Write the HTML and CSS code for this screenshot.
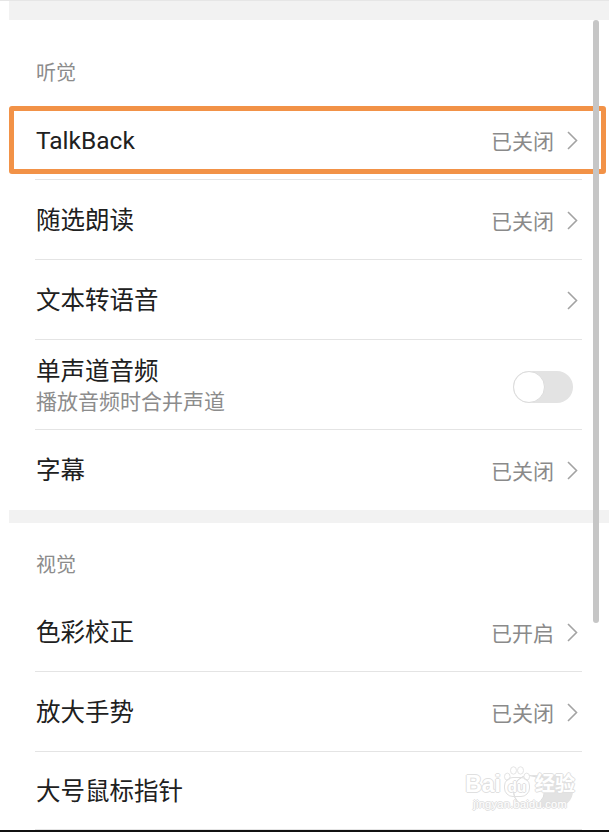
FILE: index.html
```html
<!DOCTYPE html>
<html lang="zh-CN">

<head>
    <meta charset="UTF-8">
    <meta name="viewport" content="width=device-width, initial-scale=1.0">
    <title>无障碍</title>
    <link rel="stylesheet" href="styles.css">
</head>

<body>
    <div class="screen">
        <div class="panel">
            <div class="band band-top"></div>

            <!-- 听觉 -->
            <div class="section-title first">听觉</div>

            <div class="row">
                <span class="label">TalkBack</span>
                <span class="status">已关闭</span>
                <svg class="chevron" viewBox="0 0 12 21"><path d="M2 2 L10.5 10.5 L2 19" /></svg>
                <div class="highlight"></div>
            </div>

            <div class="row">
                <span class="label">随选朗读</span>
                <span class="status">已关闭</span>
                <svg class="chevron" viewBox="0 0 12 21"><path d="M2 2 L10.5 10.5 L2 19" /></svg>
            </div>

            <div class="row">
                <span class="label">文本转语音</span>
                <svg class="chevron" viewBox="0 0 12 21"><path d="M2 2 L10.5 10.5 L2 19" /></svg>
            </div>

            <div class="row row-tall">
                <div class="text">
                    <span class="label">单声道音频</span>
                    <span class="sub">播放音频时合并声道</span>
                </div>
                <div class="switch"><div class="knob"></div></div>
            </div>

            <div class="row last">
                <span class="label">字幕</span>
                <span class="status">已关闭</span>
                <svg class="chevron" viewBox="0 0 12 21"><path d="M2 2 L10.5 10.5 L2 19" /></svg>
            </div>

            <div class="band"></div>

            <!-- 视觉 -->
            <div class="section-title">视觉</div>

            <div class="row">
                <span class="label">色彩校正</span>
                <span class="status">已开启</span>
                <svg class="chevron" viewBox="0 0 12 21"><path d="M2 2 L10.5 10.5 L2 19" /></svg>
            </div>

            <div class="row">
                <span class="label">放大手势</span>
                <span class="status">已关闭</span>
                <svg class="chevron" viewBox="0 0 12 21"><path d="M2 2 L10.5 10.5 L2 19" /></svg>
            </div>

            <div class="row row-end">
                <span class="label">大号鼠标指针</span>
                <div class="switch"><div class="knob"></div></div>

                <!-- watermark -->
                <div class="watermark">
                    <div class="wm-logo">
                        <span>Bai</span>
                        <span class="wm-paw">
                            <svg viewBox="0 0 34 18">
                                <ellipse cx="6" cy="12" rx="3.2" ry="4" />
                                <ellipse cx="13" cy="5" rx="3.4" ry="4.2" />
                                <ellipse cx="21" cy="5" rx="3.4" ry="4.2" />
                                <ellipse cx="28" cy="12" rx="3.2" ry="4" />
                            </svg>
                            <span class="wm-du">du</span>
                        </span>
                        <span class="wm-cn">经验</span>
                    </div>
                    <div class="wm-url">jingyan.baidu.com</div>
                </div>
            </div>
        </div>

        <div class="scrollbar"></div>
    </div>
</body>

</html>
```

FILE: styles.css
```css
body {
    margin: 0;
    background: #fff;
    font-family: Roboto, "Noto Sans CJK SC", sans-serif;
    overflow: hidden;
}

.screen {
    position: relative;
    height: 829px;
    border-top: 1px solid #e6e6e6;
    border-bottom: 2px solid #111;
    overflow: hidden;
}

.panel {
    margin-left: 9px;
}

/* grey separators between groups */
.band {
    height: 13px;
    background: #f2f2f2;
}

.band-top {
    height: 19px;
}

.section-title {
    height: 69px;
    box-sizing: border-box;
    display: flex;
    align-items: flex-end;
    padding: 0 0 14px 27px;
    font-size: 20px;
    line-height: 26px;
    color: #8c8c8c;
}

.section-title.first {
    height: 80px;
}

.row {
    position: relative;
    height: 80px;
    box-sizing: border-box;
    display: flex;
    align-items: center;
    padding: 0 31px 0 27px;
}

.row::after {
    content: "";
    position: absolute;
    left: 26px;
    right: 27px;
    bottom: 0;
    height: 1px;
    background: #e4e4e4;
}

.row.last::after {
    display: none;
}

.row-tall {
    height: 90px;
    padding-top: 3px;
}

.row-end {
    height: 78px;
}

.label {
    flex: 1;
    font-size: 24.5px;
    line-height: 31px;
    color: #202020;
}

.text {
    flex: 1;
    display: flex;
    flex-direction: column;
}

.sub {
    font-size: 21px;
    line-height: 31px;
    color: #8c8c8c;
}

.status {
    font-size: 21px;
    color: #8a8a8a;
    margin-right: 12px;
}

.chevron {
    width: 12px;
    height: 21px;
    fill: none;
    stroke: #a3a3a3;
    stroke-width: 1.6;
}

/* toggle, off */
.switch {
    position: relative;
    width: 60px;
    height: 32px;
    margin-right: 5px;
    border-radius: 16px;
    background: #e3e3e3;
}

.knob {
    position: absolute;
    left: 0;
    top: 0;
    width: 30px;
    height: 30px;
    border-radius: 50%;
    background: #fff;
    border: 1px solid #dcdcdc;
}

/* orange annotation frame */
.highlight {
    position: absolute;
    top: 6px;
    bottom: 6px;
    left: 0;
    right: 3px;
    border: 5px solid #f29247;
    border-radius: 3px;
}

.scrollbar {
    position: absolute;
    top: 19px;
    left: 593px;
    width: 6px;
    height: 603px;
    border-radius: 3px;
    background: #c6c6c6;
}

.watermark {
    position: absolute;
    right: 34px;
    top: 14px;
    color: #fff;
    text-shadow: 1px 0 0 #e0e0e0, -1px 0 0 #e0e0e0, 0 1px 0 #e0e0e0, 0 -1px 0 #e0e0e0;
    text-align: center;
    font-family: "Liberation Sans", "Noto Sans CJK SC", sans-serif;
}

.wm-logo {
    display: flex;
    align-items: flex-end;
    font-size: 23px;
    line-height: 25px;
    font-weight: bold;
}

.wm-paw {
    position: relative;
    display: inline-flex;
    flex-direction: column;
    align-items: center;
    margin: 0 1px;
}

.wm-paw svg {
    width: 30px;
    height: 16px;
    fill: #fff;
    stroke: #e0e0e0;
    stroke-width: 1;
}

.wm-du {
    font-size: 15px;
    line-height: 18px;
    padding: 0 3px;
    border: 1px solid #e0e0e0;
    border-radius: 9px;
    margin-top: -5px;
}

.wm-cn {
    font-size: 20px;
    margin-left: 2px;
}

.wm-url {
    font-size: 11px;
    line-height: 15px;
    font-weight: normal;
    letter-spacing: 0.3px;
}
```
